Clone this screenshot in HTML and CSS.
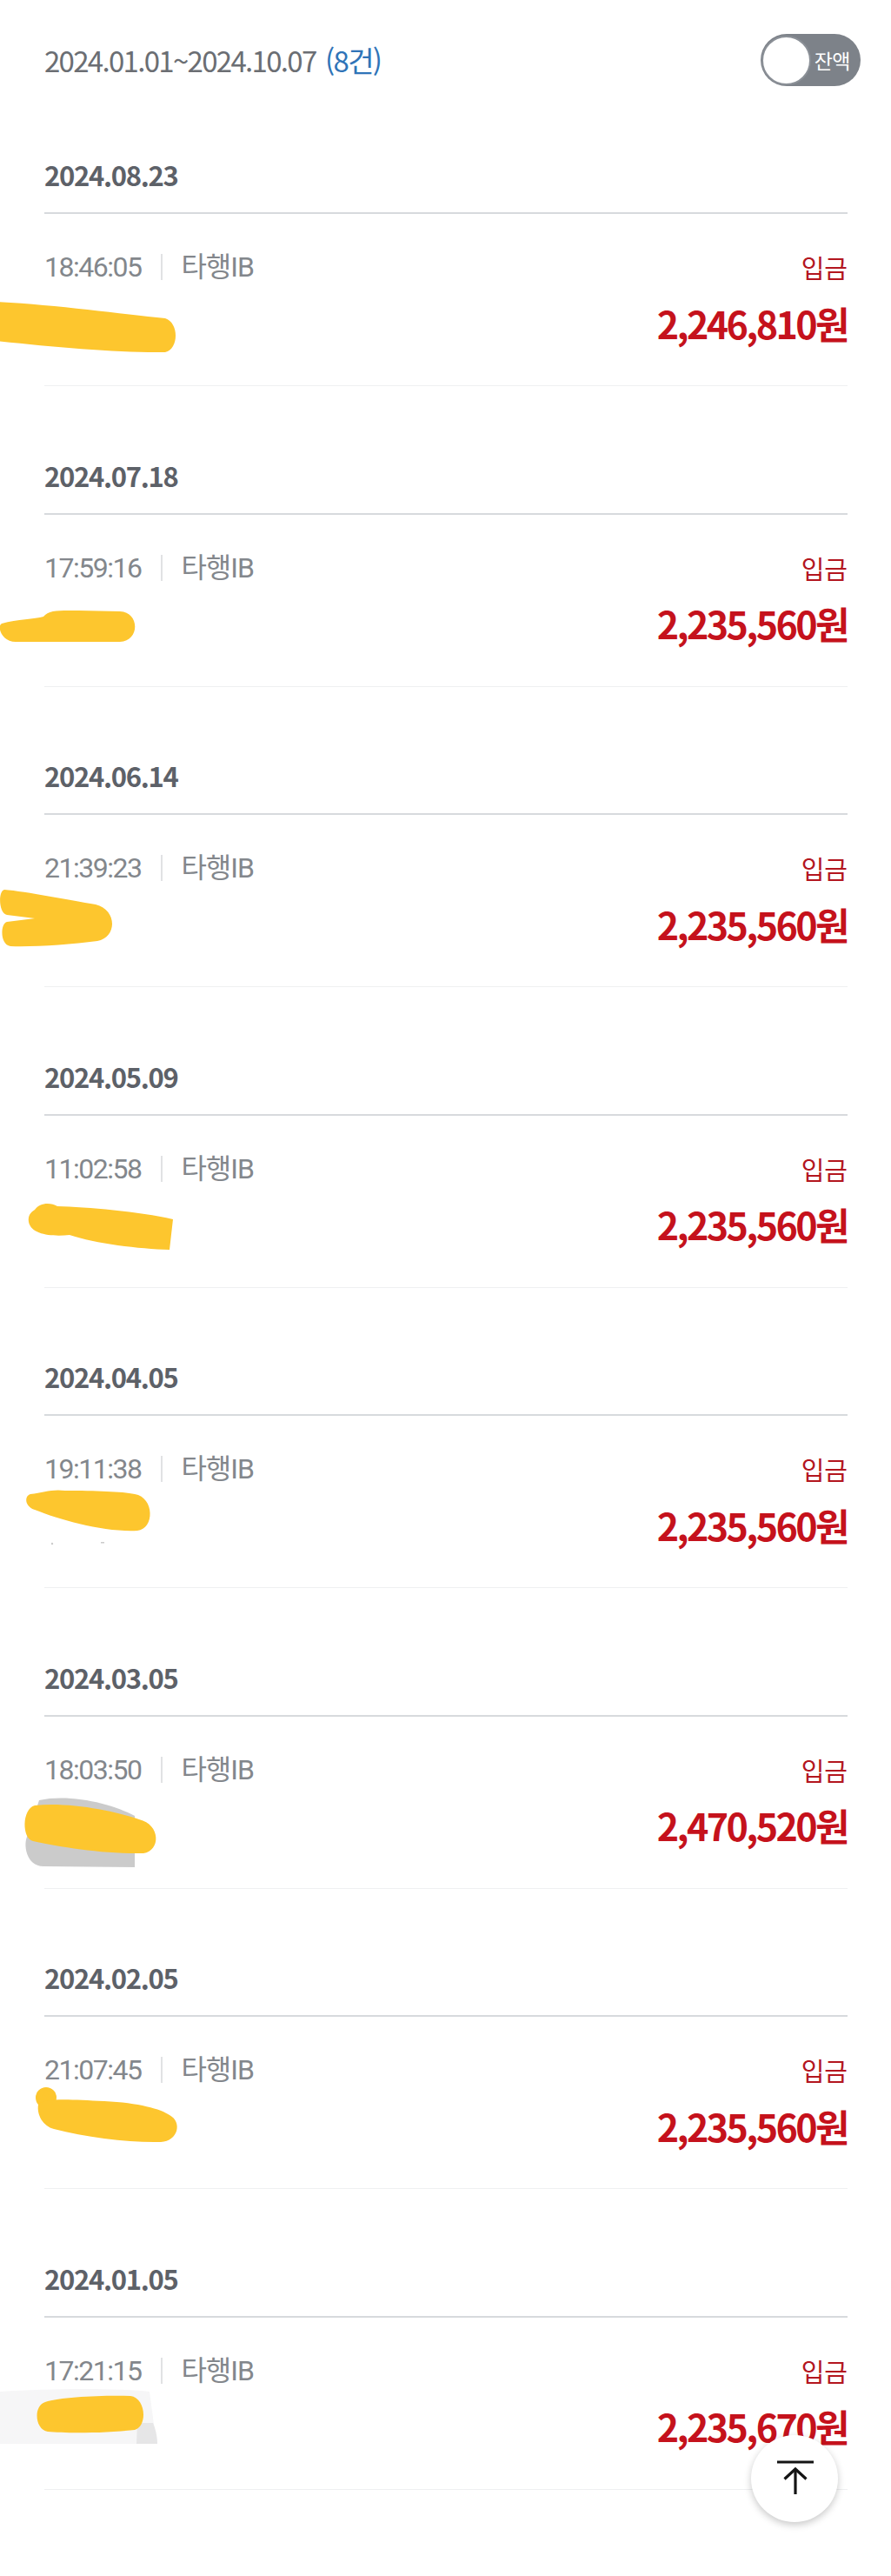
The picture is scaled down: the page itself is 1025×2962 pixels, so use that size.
FILE: index.html
```html
<!DOCTYPE html>
<html lang="ko">
<head>
<meta charset="utf-8">
<title>거래내역</title>
<link rel="stylesheet" href="styles.css">
</head>
<body>
<div class="page">
  <header class="top">
    <div class="range">2024.01.01~2024.10.07 <span class="count">(8건)</span></div>
    <div class="toggle"><span class="knob"></span><span class="toggle-label">잔액</span></div>
  </header>

  <section class="group">
    <h2 class="date">2024.08.23</h2>
    <div class="row">
      <div class="line1"><div class="meta"><span class="time">18:46:05</span><span class="bar"></span><span class="kind">타행IB</span></div><span class="type">입금</span></div>
      <div class="amount">2,246,810원</div>
    </div>
  </section>

  <section class="group">
    <h2 class="date">2024.07.18</h2>
    <div class="row">
      <div class="line1"><div class="meta"><span class="time">17:59:16</span><span class="bar"></span><span class="kind">타행IB</span></div><span class="type">입금</span></div>
      <div class="amount">2,235,560원</div>
    </div>
  </section>

  <section class="group">
    <h2 class="date">2024.06.14</h2>
    <div class="row">
      <div class="line1"><div class="meta"><span class="time">21:39:23</span><span class="bar"></span><span class="kind">타행IB</span></div><span class="type">입금</span></div>
      <div class="amount">2,235,560원</div>
    </div>
  </section>

  <section class="group">
    <h2 class="date">2024.05.09</h2>
    <div class="row">
      <div class="line1"><div class="meta"><span class="time">11:02:58</span><span class="bar"></span><span class="kind">타행IB</span></div><span class="type">입금</span></div>
      <div class="amount">2,235,560원</div>
    </div>
  </section>

  <section class="group">
    <h2 class="date">2024.04.05</h2>
    <div class="row">
      <div class="line1"><div class="meta"><span class="time">19:11:38</span><span class="bar"></span><span class="kind">타행IB</span></div><span class="type">입금</span></div>
      <div class="amount">2,235,560원</div>
    </div>
  </section>

  <section class="group">
    <h2 class="date">2024.03.05</h2>
    <div class="row">
      <div class="line1"><div class="meta"><span class="time">18:03:50</span><span class="bar"></span><span class="kind">타행IB</span></div><span class="type">입금</span></div>
      <div class="amount">2,470,520원</div>
    </div>
  </section>

  <section class="group">
    <h2 class="date">2024.02.05</h2>
    <div class="row">
      <div class="line1"><div class="meta"><span class="time">21:07:45</span><span class="bar"></span><span class="kind">타행IB</span></div><span class="type">입금</span></div>
      <div class="amount">2,235,560원</div>
    </div>
  </section>

  <section class="group">
    <h2 class="date">2024.01.05</h2>
    <div class="row">
      <div class="line1"><div class="meta"><span class="time">17:21:15</span><span class="bar"></span><span class="kind">타행IB</span></div><span class="type">입금</span></div>
      <div class="amount">2,235,670원</div>
    </div>
  </section>

  <svg class="marks" width="1025" height="2962" viewBox="0 0 1025 2962" aria-hidden="true">
    <g fill="#fdc62e">
      <path d="M-5,347 C60,350 140,361 190,366 C206,371 206,401 190,405 C140,406 60,399 -5,392 Z"/>
      <path d="M2,717 C20,712 40,712 50,709 C56,701 70,702 90,702 L138,703 C161,704 161,737 138,738 L18,738 C2,738 -4,720 2,717 Z"/>
      <path d="M5,1023 C30,1025 80,1035 110,1040 C135,1046 135,1078 112,1082 C80,1086 40,1089 12,1088 C0,1087 0,1062 8,1060 L40,1056 L8,1052 C-2,1050 -2,1024 5,1023 Z"/>
      <path d="M40,1391 C45,1383 58,1382 66,1387 C100,1388 160,1393 199,1402 L195,1437 C160,1436 110,1430 80,1420 C60,1422 36,1420 33,1405 C32,1398 35,1394 40,1391 Z"/>
      <path d="M35,1718 C50,1716 60,1712 75,1714 C110,1714 140,1715 155,1718 C178,1722 178,1758 158,1760 C120,1762 70,1748 40,1736 C28,1732 28,1720 35,1718 Z"/>
    </g>
    <g fill="#cbcbcb">
      <circle cx="60" cy="1775" r="1.2"/>
      <rect x="116" y="1773" width="4" height="1.5"/>
      <path d="M45,2070 C80,2062 130,2074 155,2088 L155,2147 L50,2146 C30,2146 26,2120 32,2110 Z"/>
    </g>
    <path fill="#fdc62e" d="M40,2076 C80,2072 130,2082 160,2092 C185,2098 185,2128 165,2131 C120,2132 70,2124 38,2117 C25,2114 25,2080 40,2076 Z"/>
    <g fill="#fdc62e">
      <circle cx="53" cy="2412" r="12"/>
      <path d="M44,2420 C50,2412 80,2414 120,2416 C160,2418 185,2425 195,2432 C210,2440 205,2462 185,2463 C150,2464 100,2458 62,2448 C50,2445 42,2432 44,2420 Z"/>
    </g>
    <path fill="#f6f6f7" d="M0,2750 C60,2746 140,2746 172,2750 L180,2810 L0,2810 Z"/>
    <path fill="#e6e6e7" d="M158,2786 L176,2786 C180,2795 181,2805 181,2810 L157,2810 Z"/>
    <path fill="#fdc62e" d="M52,2762 C70,2756 120,2754 150,2755 C168,2757 170,2790 155,2794 C120,2798 75,2798 55,2796 C40,2794 38,2766 52,2762 Z"/>
  </svg>

  <button class="to-top" type="button" aria-label="맨 위로">
    <svg width="100" height="100" viewBox="0 0 100 100">
      <g stroke="#141414" stroke-width="3.2" fill="none" stroke-linecap="butt">
        <line x1="30" y1="31" x2="72" y2="31"/>
        <line x1="51" y1="39" x2="51" y2="68"/>
        <polyline points="38.5,50.5 51,39 63.5,50.5"/>
      </g>
    </svg>
  </button>
</div>
</body>
</html>
```

FILE: styles.css
```css
* { box-sizing: border-box; }

html, body {
  margin: 0;
  padding: 0;
  background: #ffffff;
}

body {
  font-family: "Noto Sans CJK KR", "Noto Sans", sans-serif;
  color: #6b6e73;
}

.page {
  position: relative;
  width: 1025px;
  min-height: 2962px;
  overflow: hidden;
}

.top {
  display: flex;
  justify-content: space-between;
  align-items: center;
  height: 60px;
  margin-top: 39px;
  margin-bottom: 72px;
  padding: 0 35px 0 51px;
}

.range {
  font-size: 33px;
  line-height: 40px;
  letter-spacing: -1.7px;
  color: #6b6e73;
  white-space: nowrap;
}

.count {
  color: #2f74b8;
  margin-left: 3px;
}

.toggle {
  display: flex;
  align-items: center;
  justify-content: space-between;
  width: 115px;
  height: 60px;
  padding: 0 12px 0 1px;
  border-radius: 30px;
  background: #7d8289;
}

.knob {
  width: 57px;
  height: 57px;
  border-radius: 50%;
  background: #ffffff;
  border: 2px solid #8b9097;
}

.toggle-label {
  font-size: 23px;
  line-height: 30px;
  color: #ffffff;
  letter-spacing: -0.5px;
}

.group {
  margin: 0 50px 0 51px;
  padding-top: 72.5px;
}

.group:first-of-type {
  padding-top: 0;
}

.date {
  margin: 0;
  font-size: 31px;
  line-height: 60px;
  font-weight: 700;
  letter-spacing: -1.3px;
  color: #5d6168;
  padding-bottom: 13px;
  border-bottom: 2px solid #d7dadd;
}

.row {
  padding: 41px 0 47.5px;
  border-bottom: 1px solid #eff0f1;
}

.line1 {
  display: flex;
  justify-content: space-between;
  align-items: center;
  height: 40px;
}

.meta {
  display: flex;
  align-items: center;
}

.time,
.kind {
  font-family: "Roboto", "Noto Sans CJK KR", sans-serif;
  font-size: 32px;
  line-height: 40px;
  letter-spacing: -1.5px;
  color: #83878c;
}

.kind {
  letter-spacing: -1px;
}

.bar {
  width: 2px;
  height: 30px;
  margin: 0 21px 0 23px;
  background: #e1e2e4;
}

.type {
  font-size: 29px;
  line-height: 40px;
  color: #b3161f;
}

.amount {
  margin-top: 18.5px;
  text-align: right;
  font-size: 43px;
  line-height: 50px;
  font-weight: 700;
  letter-spacing: -2.6px;
  color: #c5121c;
}

.marks {
  position: absolute;
  top: 0;
  left: 0;
  pointer-events: none;
}

.to-top {
  position: absolute;
  left: 864px;
  top: 2800px;
  width: 100px;
  height: 100px;
  padding: 0;
  border: none;
  border-radius: 50%;
  background: #ffffff;
  box-shadow: 0 3px 9px rgba(0, 0, 0, 0.22);
}

.to-top svg {
  display: block;
}
```
